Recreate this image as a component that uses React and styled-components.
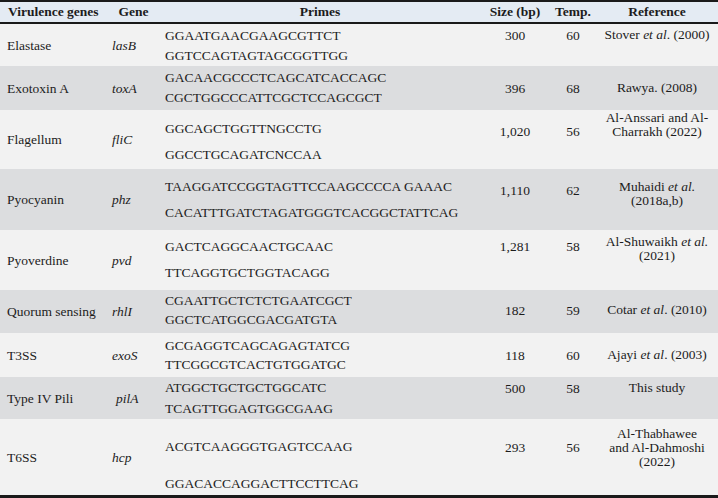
import React from "react";
import styled, { createGlobalStyle } from "styled-components";

const SERIF = `"Liberation Serif", "DejaVu Serif", "Times New Roman", Times, serif`;

const Global = createGlobalStyle`
  html, body { margin: 0; padding: 0; background: #ffffff; }
  body { font-family: ${SERIF}; color: #1c1c1c; }
`;

const COLS = "107px 53px 320px 70px 46px 122px";

const Table = styled.div`
  width: 718px;
  font-family: ${SERIF};
  font-size: 13.5px;
  color: #1c1c1c;
  border-bottom: 3px solid #1a1a1a;
`;

const HeaderRow = styled.div`
  display: grid;
  grid-template-columns: ${COLS};
  height: 20px;
  align-items: center;
  background: #e4ebf3;
  border-top: 2px solid #1a1a1a;
  border-bottom: 2px solid #1a1a1a;
  font-weight: bold;
  line-height: 20px;
`;

const HeadCell = styled.div`
  text-align: ${(p) => (p.$left ? "left" : "center")};
  padding-left: ${(p) => (p.$left ? "8px" : "0")};
  white-space: nowrap;
`;

const Row = styled.div`
  display: grid;
  grid-template-columns: ${COLS};
  height: ${(p) => p.$h}px;
  background: ${(p) => (p.$dark ? "#dcdddf" : "#f2f2f2")};
`;

const LabelCell = styled.div`
  align-self: center;
  padding-left: 7px;
  line-height: 19px;
  white-space: nowrap;
`;

const GeneCell = styled.div`
  align-self: center;
  padding-left: ${(p) => 5 + (p.$indent || 0)}px;
  font-style: italic;
  line-height: 19px;
`;

const PrimerCell = styled.div`
  display: flex;
  flex-direction: column;
  gap: ${(p) => p.$gap}px;
  padding-top: ${(p) => p.$pt}px;
  padding-left: 5px;
  line-height: 19px;
  white-space: nowrap;
`;

const NumCell = styled.div`
  padding-top: ${(p) => p.$pt}px;
  text-align: center;
  line-height: 19px;
`;

const RefCell = styled.div`
  padding-top: ${(p) => p.$pt}px;
  text-align: center;
  line-height: 14px;
  white-space: nowrap;
`;

const Em = styled.i`
  font-style: italic;
`;

const rows = [
  {
    label: "Elastase", gene: "lasB",
    primers: ["GGAATGAACGAAGCGTTCT", "GGTCCAGTAGTAGCGGTTGG"],
    size: "300", temp: "60",
    ref: [<>Stover <Em>et al</Em>. (2000)</>],
    h: 42, pt: 1.5, gap: 1, npt: 1.5, rpt: 4,
  },
  {
    label: "Exotoxin A", gene: "toxA",
    primers: ["GACAACGCCCTCAGCATCACCAGC", "CGCTGGCCCATTCGCTCCAGCGCT"],
    size: "396", temp: "68",
    ref: ["Rawya. (2008)"],
    h: 44, pt: 1.5, gap: 1, npt: 12.5, rpt: 15, dark: true,
  },
  {
    label: "Flagellum", gene: "fliC",
    primers: ["GGCAGCTGGTTNGCCTG", "GGCCTGCAGATCNCCAA"],
    size: "1,020", temp: "56",
    ref: ["Al-Anssari and Al-", "Charrakh (2022)"],
    h: 59, pt: 9, gap: 7, npt: 12, rpt: 1,
  },
  {
    label: "Pyocyanin", gene: "phz",
    primers: ["TAAGGATCCGGTAGTTCCAAGCCCCA GAAAC", "CACATTTGATCTAGATGGGTCACGGCTATTCAG"],
    size: "1,110", temp: "62",
    ref: [<>Muhaidi <Em>et al.</Em></>, "(2018a,b)"],
    h: 61, pt: 8, gap: 7, npt: 12, rpt: 11, dark: true,
  },
  {
    label: "Pyoverdine", gene: "pvd",
    primers: ["GACTCAGGCAACTGCAAC", "TTCAGGTGCTGGTACAGG"],
    size: "1,281", temp: "58",
    ref: [<>Al-Shuwaikh <Em>et al.</Em></>, "(2021)"],
    h: 60, pt: 7, gap: 7, npt: 7, rpt: 5,
  },
  {
    label: "Quorum sensing", gene: "rhlI",
    primers: ["CGAATTGCTCTCTGAATCGCT", "GGCTCATGGCGACGATGTA"],
    size: "182", temp: "59",
    ref: [<>Cotar <Em>et al</Em>. (2010)</>],
    h: 43, pt: 1, gap: 0, npt: 10.5, rpt: 13, dark: true,
  },
  {
    label: "T3SS", gene: "exoS",
    primers: ["GCGAGGTCAGCAGAGTATCG", "TTCGGCGTCACTGTGGATGC"],
    size: "118", temp: "60",
    ref: [<>Ajayi <Em>et al</Em>. (2003)</>],
    h: 44, pt: 3, gap: 0, npt: 12.5, rpt: 15,
  },
  {
    label: "Type IV Pili", gene: "pilA", indent: 4,
    primers: ["ATGGCTGCTGCTGGCATC", "TCAGTTGGAGTGGCGAAG"],
    size: "500", temp: "58",
    ref: ["This study"],
    h: 42, pt: 0.5, gap: 2, npt: 1.5, rpt: 4, dark: true,
  },
  {
    label: "T6SS", gene: "hcp",
    primers: ["ACGTCAAGGGTGAGTCCAAG", "GGACACCAGGACTTCCTTCAG"],
    size: "293", temp: "56",
    ref: ["Al-Thabhawee", "and Al-Dahmoshi", "(2022)"],
    h: 76, pt: 17.5, gap: 18, npt: 18.5, rpt: 8,
  },
];

export default function App() {
  return (
    <>
      <Global />
      <Table>
        <HeaderRow>
          <HeadCell $left>Virulence genes</HeadCell>
          <HeadCell>Gene</HeadCell>
          <HeadCell>Primes</HeadCell>
          <HeadCell>Size (bp)</HeadCell>
          <HeadCell>Temp.</HeadCell>
          <HeadCell>Reference</HeadCell>
        </HeaderRow>
        {rows.map((r) => (
          <Row key={r.label} $h={r.h} $dark={r.dark}>
            <LabelCell>{r.label}</LabelCell>
            <GeneCell $indent={r.indent}>{r.gene}</GeneCell>
            <PrimerCell $pt={r.pt} $gap={r.gap}>
              {r.primers.map((p) => (
                <span key={p}>{p}</span>
              ))}
            </PrimerCell>
            <NumCell $pt={r.npt}>{r.size}</NumCell>
            <NumCell $pt={r.npt}>{r.temp}</NumCell>
            <RefCell $pt={r.rpt}>
              {r.ref.map((line, i) => (
                <div key={i}>{line}</div>
              ))}
            </RefCell>
          </Row>
        ))}
      </Table>
    </>
  );
}
